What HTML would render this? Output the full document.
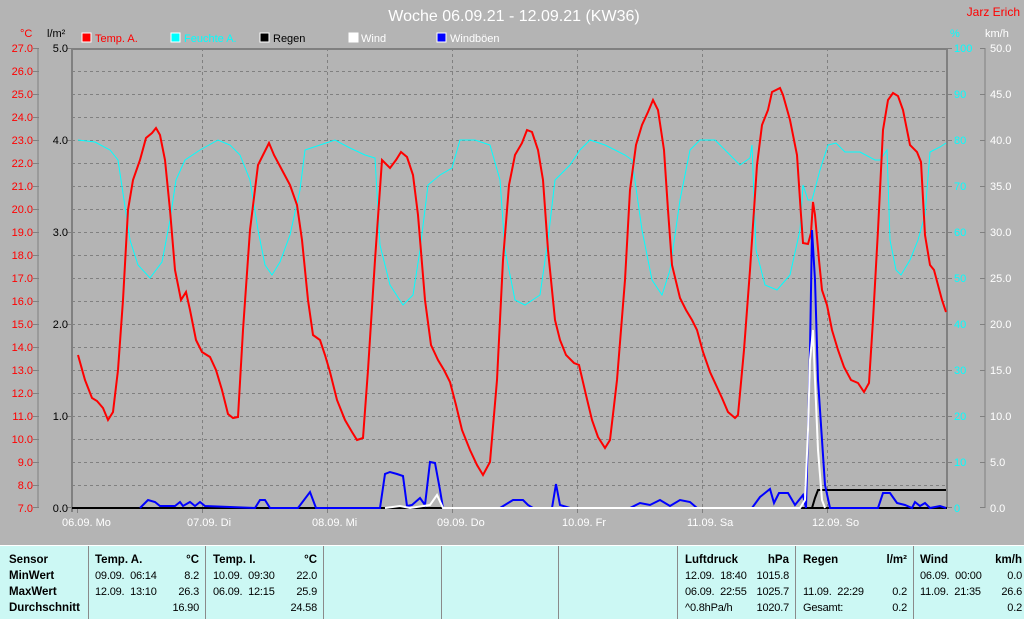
<!DOCTYPE html>
<html><head><meta charset="utf-8"><style>
body{margin:0;width:1024px;height:618px;overflow:hidden;background:#b4b4b4;font-family:"Liberation Sans",sans-serif}
svg{position:absolute;left:0;top:0}
.tb{position:absolute;left:0;top:545px;width:1024px;height:73px;background:#ccf8f4;border-top:1px solid #fff;font-size:11.5px;color:#000}
.c{position:absolute;top:0;height:73px;border-left:1px solid #8a8a8a;box-shadow:inset 1px 0 #fff}
.r{position:absolute;white-space:pre}
.d{font-size:11px;letter-spacing:-0.2px}
.b{font-weight:bold;font-size:11.5px}
</style></head><body>
<svg width="1024" height="545" font-family="Liberation Sans, sans-serif">
<text x="514" y="21" fill="#fff" font-size="16" text-anchor="middle">Woche 06.09.21 - 12.09.21 (KW36)</text>
<text x="1020" y="16" fill="#f00" font-size="12" text-anchor="end">Jarz Erich</text>
<text x="20" y="37" fill="#f00" font-size="11">°C</text>
<text x="47" y="37" fill="#000" font-size="11">l/m²</text>
<text x="950" y="37" fill="#0ff" font-size="11">%</text>
<text x="985" y="37" fill="#fff" font-size="11">km/h</text>
<g font-size="11">
<rect x="82" y="33" width="9" height="9" fill="#f00" stroke="#fff"/><text x="95" y="42" fill="#f00">Temp. A.</text>
<rect x="171" y="33" width="9" height="9" fill="#0ff" stroke="#fff"/><text x="184" y="42" fill="#0ff">Feuchte A.</text>
<rect x="260" y="33" width="9" height="9" fill="#000" stroke="#fff"/><text x="273" y="42" fill="#000">Regen</text>
<rect x="349" y="33" width="9" height="9" fill="#fff" stroke="#fff"/><text x="361" y="42" fill="#fff">Wind</text>
<rect x="437" y="33" width="9" height="9" fill="#00f" stroke="#fff"/><text x="450" y="42" fill="#fff">Windböen</text>
</g>
<g stroke="#808080" stroke-dasharray="3,3" stroke-width="1">
<path d="M72 71.5H947M72 94.5H947M72 117.5H947M72 140.5H947M72 163.5H947M72 186.5H947M72 209.5H947M72 232.5H947M72 255.5H947M72 278.5H947M72 301.5H947M72 324.5H947M72 347.5H947M72 370.5H947M72 393.5H947M72 416.5H947M72 439.5H947M72 462.5H947M72 485.5H947"/>
<path d="M202.5 48V508M327.5 48V508M452.5 48V508M577.5 48V508M702.5 48V508M827.5 48V508"/>
</g>
<g stroke="#808080" stroke-width="2" fill="none">
<path d="M72 49H947V508"/><path d="M72 48V512"/>
</g>
<path d="M38 48V508M985 48V508" stroke="#808080"/>
<g stroke="#808080">
<path d="M33 48.5h6M33 71.5h6M33 94.5h6M33 117.5h6M33 140.5h6M33 163.5h6M33 186.5h6M33 209.5h6M33 232.5h6M33 255.5h6M33 278.5h6M33 301.5h6M33 324.5h6M33 347.5h6M33 370.5h6M33 393.5h6M33 416.5h6M33 439.5h6M33 462.5h6M33 485.5h6M33 507.5h6"/>
<path d="M67 48.5h5M67 140.5h5M67 232.5h5M67 324.5h5M67 416.5h5M67 507.5h5"/>
<path d="M947 48.5h5M947 94.5h5M947 140.5h5M947 186.5h5M947 232.5h5M947 278.5h5M947 324.5h5M947 370.5h5M947 416.5h5M947 462.5h5M947 507.5h5"/>
<path d="M980 48.5h5M980 94.5h5M980 140.5h5M980 186.5h5M980 232.5h5M980 278.5h5M980 324.5h5M980 370.5h5M980 416.5h5M980 462.5h5M980 507.5h5"/>
<path d="M77.5 508v5M202.5 508v5M327.5 508v5M452.5 508v5M577.5 508v5M702.5 508v5M827.5 508v5"/>
</g>
<g fill="#f00" font-size="11" text-anchor="end">
<text x="33" y="52">27.0</text><text x="33" y="75">26.0</text><text x="33" y="98">25.0</text><text x="33" y="121">24.0</text><text x="33" y="144">23.0</text><text x="33" y="167">22.0</text><text x="33" y="190">21.0</text><text x="33" y="213">20.0</text><text x="33" y="236">19.0</text><text x="33" y="259">18.0</text><text x="33" y="282">17.0</text><text x="33" y="305">16.0</text><text x="33" y="328">15.0</text><text x="33" y="351">14.0</text><text x="33" y="374">13.0</text><text x="33" y="397">12.0</text><text x="33" y="420">11.0</text><text x="33" y="443">10.0</text><text x="33" y="466">9.0</text><text x="33" y="489">8.0</text><text x="33" y="512">7.0</text>
</g>
<g fill="#000" font-size="11" text-anchor="end">
<text x="68" y="52">5.0</text><text x="68" y="144">4.0</text><text x="68" y="236">3.0</text><text x="68" y="328">2.0</text><text x="68" y="420">1.0</text><text x="68" y="512">0.0</text>
</g>
<g fill="#0ff" font-size="11">
<text x="954" y="52">100</text><text x="954" y="98">90</text><text x="954" y="144">80</text><text x="954" y="190">70</text><text x="954" y="236">60</text><text x="954" y="282">50</text><text x="954" y="328">40</text><text x="954" y="374">30</text><text x="954" y="420">20</text><text x="954" y="466">10</text><text x="954" y="512">0</text>
</g>
<g fill="#fff" font-size="11">
<text x="990" y="52">50.0</text><text x="990" y="98">45.0</text><text x="990" y="144">40.0</text><text x="990" y="190">35.0</text><text x="990" y="236">30.0</text><text x="990" y="282">25.0</text><text x="990" y="328">20.0</text><text x="990" y="374">15.0</text><text x="990" y="420">10.0</text><text x="990" y="466">5.0</text><text x="990" y="512">0.0</text>
</g>
<g fill="#fff" font-size="11">
<text x="62" y="526">06.09.  Mo</text><text x="187" y="526">07.09.  Di</text><text x="312" y="526">08.09.  Mi</text><text x="437" y="526">09.09.  Do</text><text x="562" y="526">10.09.  Fr</text><text x="687" y="526">11.09.  Sa</text><text x="812" y="526">12.09.  So</text>
</g>
<polyline fill="none" stroke="#0ff" stroke-width="1" points="78,140 95,142 110,150 118,160 124,200 130,240 138,265 150,278 162,262 170,220 176,180 185,160 200,150 218,140 230,145 240,155 250,180 258,230 265,265 272,275 280,262 290,235 300,190 305,150 320,145 335,140 350,148 365,155 375,158 380,245 390,285 403,305 413,295 420,250 428,185 440,175 452,168 460,140 475,140 490,145 500,180 505,250 515,300 525,305 540,295 548,240 555,180 570,165 580,150 590,140 605,145 615,150 625,155 632,160 642,230 652,280 662,295 670,270 680,200 690,150 700,140 715,140 730,155 740,165 750,158 752,145 756,250 765,285 777,290 790,275 800,230 803,185 808,200 812,200 820,170 828,145 836,143 845,152 860,152 875,160 880,160 887,150 890,240 896,270 901,275 910,260 918,240 925,215 930,152 940,147 946,143"/>
<polyline fill="none" stroke="#f00" stroke-width="2" points="78,355 85,380 92,398 97,401 103,408 108,420 113,412 118,370 123,300 128,210 133,180 140,160 146,138 152,133 156,128 160,135 165,160 170,210 175,270 181,300 186,292 190,310 196,340 202,352 210,357 216,370 222,390 228,414 233,418 238,417 243,330 250,230 258,165 263,155 269,143 274,155 282,170 290,185 297,205 302,240 308,300 313,335 320,340 325,355 330,372 337,400 345,420 352,432 357,440 363,438 368,370 375,260 382,160 390,168 396,160 401,152 407,157 413,175 418,215 425,300 431,345 438,360 444,370 450,382 456,405 462,430 470,450 477,465 483,475 490,462 497,380 503,260 509,185 515,155 522,143 527,130 532,132 538,150 543,180 548,250 555,320 560,340 566,355 574,363 579,365 586,395 592,420 598,437 605,448 610,440 617,380 625,280 630,190 636,145 642,125 648,112 653,100 658,110 664,150 668,210 672,265 680,298 686,310 692,320 697,330 703,352 710,372 716,385 722,398 728,412 735,418 738,415 744,350 750,270 757,165 762,125 768,110 772,92 780,88 783,95 790,120 797,155 801,215 803,243 808,244 811,233 813,202 815,215 819,260 822,290 827,305 832,330 838,350 844,367 851,380 858,383 864,392 869,383 873,320 878,230 883,130 888,100 893,93 898,96 903,110 910,145 917,152 921,162 925,235 930,265 934,270 938,285 942,300 946,312"/>
<path d="M72 508H947" stroke="#000" stroke-width="2"/>
<polyline fill="none" stroke="#000" stroke-width="2" points="812,508 815,498 818,490 946,490"/>
<polyline fill="none" stroke="#00f" stroke-width="2" points="140,508 148,500 155,502 160,506 175,506 180,502 183,506 190,502 195,506 200,502 205,506 255,508 260,500 265,500 270,508 298,508 310,492 316,508 380,508 385,474 390,472 397,474 403,476 407,506 412,505 420,498 425,505 430,462 435,463 440,490 443,508 500,508 513,500 523,500 528,505 533,508 552,508 556,484 560,505 570,508 630,508 640,503 650,505 660,500 670,506 680,500 690,502 697,508 752,508 760,497 770,489 774,503 779,493 788,493 795,505 803,495 806,508 810,350 812,230 815,280 818,380 822,440 825,485 830,508 878,508 883,493 890,493 897,503 905,505 912,508 915,502 920,506 925,503 930,508 940,506 946,508"/>
<polyline fill="none" stroke="#fff" stroke-width="2" points="385,508 400,506 410,508 430,505 437,495 443,508 800,508 805,500 808,430 810,360 813,330 815,380 818,450 822,500 825,508"/>
</svg>
<div class="tb">
<div class="c" style="left:88px"></div><div class="c" style="left:205px"></div><div class="c" style="left:323px"></div><div class="c" style="left:441px"></div><div class="c" style="left:558px"></div><div class="c" style="left:677px"></div><div class="c" style="left:795px"></div><div class="c" style="left:913px"></div>
<div class="r b" style="left:9px;top:8px">Sensor</div><div class="r b" style="left:9px;top:24px">MinWert</div><div class="r b" style="left:9px;top:40px">MaxWert</div><div class="r b" style="left:9px;top:56px">Durchschnitt</div>
<div class="r b" style="left:95px;top:8px">Temp. A.</div><div class="r b" style="right:825px;top:8px">°C</div>
<div class="r d" style="left:95px;top:24px">09.09.  06:14</div><div class="r d" style="right:825px;top:24px">8.2</div>
<div class="r d" style="left:95px;top:40px">12.09.  13:10</div><div class="r d" style="right:825px;top:40px">26.3</div>
<div class="r d" style="right:825px;top:56px">16.90</div>
<div class="r b" style="left:213px;top:8px">Temp. I.</div><div class="r b" style="right:707px;top:8px">°C</div>
<div class="r d" style="left:213px;top:24px">10.09.  09:30</div><div class="r d" style="right:707px;top:24px">22.0</div>
<div class="r d" style="left:213px;top:40px">06.09.  12:15</div><div class="r d" style="right:707px;top:40px">25.9</div>
<div class="r d" style="right:707px;top:56px">24.58</div>
<div class="r b" style="left:685px;top:8px">Luftdruck</div><div class="r b" style="right:235px;top:8px">hPa</div>
<div class="r d" style="left:685px;top:24px">12.09.  18:40</div><div class="r d" style="right:235px;top:24px">1015.8</div>
<div class="r d" style="left:685px;top:40px">06.09.  22:55</div><div class="r d" style="right:235px;top:40px">1025.7</div>
<div class="r d" style="left:685px;top:56px">^0.8hPa/h</div><div class="r d" style="right:235px;top:56px">1020.7</div>
<div class="r b" style="left:803px;top:8px">Regen</div><div class="r b" style="right:117px;top:8px">l/m²</div>
<div class="r d" style="left:803px;top:40px">11.09.  22:29</div><div class="r d" style="right:117px;top:40px">0.2</div>
<div class="r d" style="left:803px;top:56px">Gesamt:</div><div class="r d" style="right:117px;top:56px">0.2</div>
<div class="r b" style="left:920px;top:8px">Wind</div><div class="r b" style="right:2px;top:8px">km/h</div>
<div class="r d" style="left:920px;top:24px">06.09.  00:00</div><div class="r d" style="right:2px;top:24px">0.0</div>
<div class="r d" style="left:920px;top:40px">11.09.  21:35</div><div class="r d" style="right:2px;top:40px">26.6</div>
<div class="r d" style="right:2px;top:56px">0.2</div>
</div>
</body></html>
